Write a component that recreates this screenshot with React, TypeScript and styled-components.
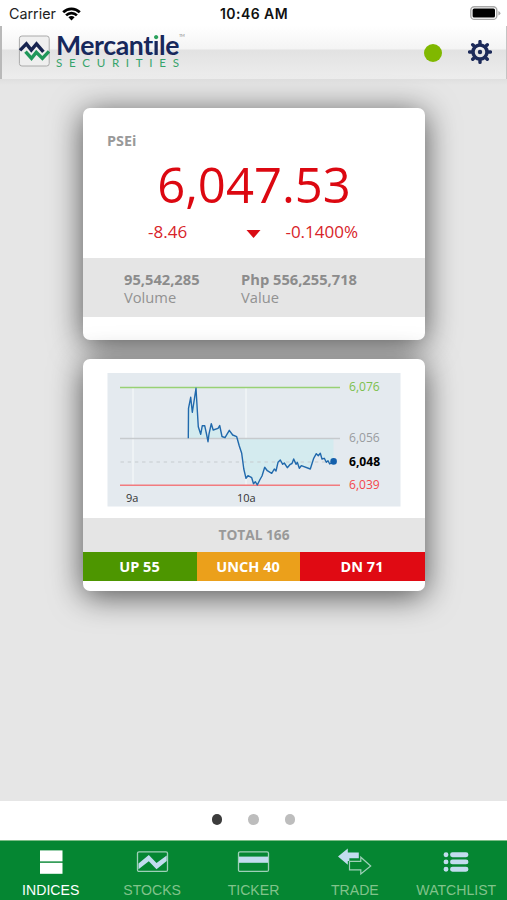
import React from "react";
import styled, { createGlobalStyle } from "styled-components";

const GlobalStyle = createGlobalStyle`
  * { box-sizing: border-box; }
  body { margin: 0; background: #fff; }
`;

const Screen = styled.div`
  width: 507px;
  height: 900px;
  display: flex;
  flex-direction: column;
  overflow: hidden;
  background: #fff;
  font-family: "Open Sans", "Noto Sans", sans-serif;
`;

const StatusBar = styled.div`
  height: 26px;
  flex: none;
  display: grid;
  grid-template-columns: 1fr auto 1fr;
  align-items: center;
  padding: 1px 6px 0 9px;
  font: 400 14.3px/20px Inter, sans-serif;
  color: #222;
`;

const Carrier = styled.div`
  display: flex;
  align-items: center;
  gap: 6px;
`;

const Clock = styled.div`
  font-weight: 600;
  font-size: 14px;
  letter-spacing: 0.45px;
  margin-right: 2px;
  color: #111;
`;

const Battery = styled.svg`
  justify-self: end;
`;

const Header = styled.header`
  height: 53px;
  flex: none;
  display: flex;
  align-items: center;
  padding: 0 14px 0 16px;
  border-left: 2px solid #b9b9b9;
  border-right: 1px solid #c4c4c4;
  background: linear-gradient(#fff 0, #f4f4f4 23px, #e2e2e2 24px, #ededed 53px);
`;

const Brand = styled.div`
  display: flex;
  align-items: flex-start;
  flex: 1;
`;

const BrandWords = styled.div`
  margin-left: 6px;
  height: 40px;
  color: #17285c;
  font-family: Lato, sans-serif;
`;

const BrandName = styled.div`
  display: flex;
  font-size: 26.6px;
  line-height: 25px;
  font-weight: 700;
  letter-spacing: -0.4px;
`;

const TradeMark = styled.span`
  font-size: 4px;
  line-height: 6px;
  color: #888;
  font-weight: 400;
`;

const BrandSub = styled.div`
  font-size: 11.6px;
  line-height: 10px;
  letter-spacing: 6.7px;
  color: #36a36b;
`;

const GreenLetter = styled.span`
  background: linear-gradient(#2ba15c 0 11px, #17285c 11px);
  background-clip: text;
  color: transparent;
`;

const Online = styled.span`
  width: 18px;
  height: 18px;
  border-radius: 50%;
  background: #80b800;
  margin: 0 26px 0 0;
`;

const Content = styled.main`
  height: 722px;
  flex: none;
  padding: 29px 82px 0 83px;
  display: flex;
  flex-direction: column;
  gap: 19px;
  background: linear-gradient(#dfdfdf 0, #e6e6e6 6px);
`;

const Card = styled.section`
  height: 232px;
  flex: none;
  border-radius: 7px;
  overflow: hidden;
  background: #fff;
  box-shadow: 0 5px 32px rgba(0, 0, 0, 0.66);
`;

const IndexName = styled.div`
  padding: 23px 0 0 24px;
  font-size: 14.4px;
  line-height: 20px;
  font-weight: 700;
  color: #999;
`;

const Price = styled.div`
  margin-top: 0;
  text-align: center;
  font-size: 49px;
  line-height: 66px;
  color: #dc0811;
`;

const ChangeRow = styled.div`
  display: flex;
  align-items: center;
  height: 28px;
  margin-bottom: 13px;
  padding-left: 65px;
  font-size: 17px;
  color: #d8242a;
`;

const Arrow = styled.svg`
  margin: 5px 24px 0 auto;
`;

const Percent = styled.span`
  margin-right: 67px;
`;

const Stats = styled.div`
  height: 59px;
  display: grid;
  grid-template-columns: 117px 1fr;
  padding: 12px 0 0 41px;
  background: #e5e5e5;
  color: #929292;
  font-size: 14.7px;
  line-height: 18px;
`;

const Strong = styled.div`
  font-weight: 700;
  color: #8c8c8c;
`;

const ChartBox = styled.div`
  padding: 14px 0 0 24px;
  height: 159px;

  svg { display: block; }
`;

const Total = styled.div`
  height: 34px;
  background: #e5e5e5;
  color: #999;
  text-align: center;
  font-size: 13.7px;
  line-height: 34px;
  font-weight: 700;
`;

const Breadth = styled.div`
  display: grid;
  grid-template-columns: 114px 103px 125px;
  height: 29px;
`;

const Segment = styled.div<{ $color: string }>`
  background: ${(p) => p.$color};
  color: #fff;
  text-align: center;
  font-size: 14.5px;
  line-height: 29px;
  padding-right: 1px;
  font-weight: 700;
`;

const Pager = styled.div`
  height: 39px;
  flex: none;
  display: flex;
  justify-content: center;
  align-items: center;
  gap: 26px;
  padding-bottom: 2px;
`;

const Dot = styled.span<{ $active?: boolean }>`
  width: 10.5px;
  height: 10.5px;
  border-radius: 50%;
  background: ${(p) => (p.$active ? "#3c3c3c" : "#bdbdbd")};
`;

const TabBar = styled.nav`
  height: 60px;
  flex: none;
  display: grid;
  grid-template-columns: repeat(5, 1fr);
  background: #058632;
  border-top: 1px solid #7cbd86;
`;

const Tab = styled.div<{ $active?: boolean }>`
  display: flex;
  flex-direction: column;
  align-items: center;
  padding-top: 5px;
  font: 14.1px/18px "Liberation Sans", sans-serif;
  color: ${(p) => (p.$active ? "#fff" : "#81c38b")};

  svg { margin-bottom: 3px; }
`;

const linePoints =
  "188.3,438.3 188.5,408.3 190.7,397.3 192.3,412.3 193.3,406 196,388.3 197.4,412 198.3,426.7 200.7,434.3 202.3,425.7 204.7,425.7 206.7,435 208,441.7 209,434 211.3,423.7 213.2,430 218,428.3 219.7,425.5 222,436.5 225,437.7 229.3,430.3 232.7,435 236.7,436.7 239.3,446 241.7,453.3 243.8,469 246,478.3 248,475.7 251.7,477.7 253.5,483.7 255.3,481.7 257.3,485 260,479.5 262,476 264.7,467.3 267.3,470.7 271.7,473.3 274.3,469 276,471 278,462.3 280.3,460 282.7,464.3 284.3,463 287.3,467.7 290.3,464.3 292,463.5 293.7,459 296,464.3 297.3,462.3 299.3,468.3 301.3,465.7 310.3,469 313.7,458.3 316.3,453.7 318.3,455.7 320.3,453.3 322,459 324.3,458.3 326.3,462.3 328,460.7 329.7,464 333.5,461.5";

const Chart = () => (
  <svg width="294" height="134" viewBox="107 373 294 134" fontFamily="Open Sans, sans-serif">
    <rect x="107.5" y="373" width="293" height="133.5" fill="#e4eaef" />
    <path d="M133 388v97M246 388v97" stroke="#f3f6f8" strokeWidth="1.4" />
    <polygon points={`${linePoints} 333.5,438.3`} fill="#d4ebef" />
    <path d="M120 438.5H340" stroke="#c6cacd" strokeWidth="1.6" />
    <path d="M120.5 462H333" stroke="#c5cbcf" strokeWidth="1.2" strokeDasharray="3.4 3.8" />
    <path d="M120 387.5H340" stroke="#98d174" strokeWidth="1.4" />
    <path d="M120 485.3H340" stroke="#f27b7f" strokeWidth="1.4" />
    <polyline points={linePoints} fill="none" stroke="#2169ac" strokeWidth="1.4" strokeLinejoin="round" />
    <circle cx="333.6" cy="461.4" r="3.3" fill="#1460ac" />
    <g fontSize="12.1">
      <text x="349" y="391" fill="#7cc04c">6,076</text>
      <text x="349" y="442" fill="#999c9f">6,056</text>
      <text x="349" y="465.6" fill="#000" fontWeight="700">6,048</text>
      <text x="349" y="488.5" fill="#f4474b">6,039</text>
    </g>
    <g fontSize="11" fill="#333">
      <text x="126" y="502">9a</text>
      <text x="237" y="502">10a</text>
    </g>
  </svg>
);

const Wifi = () => (
  <svg width="19" height="14" viewBox="0 0 19 14" fill="none" stroke="#000" strokeWidth="2.7">
    <path d="M1.2 5.2a11.8 11.8 0 0 1 16.6 0M4.1 8.4a7.7 7.7 0 0 1 10.8 0" />
    <path d="M6.4 10.3a4.4 4.4 0 0 1 6.2 0L9.5 13.5z" fill="#000" stroke="none" />
  </svg>
);

const Logo = () => (
  <svg width="32" height="40" viewBox="0 0 32 40">
    <rect x="1.4" y="3" width="29.8" height="30" rx="2.5" fill="#efefef" stroke="#aaa" />
    <path d="M2 17.4L8.4 10.9L13.3 17L18.5 10.9L25.4 18.8" fill="none" stroke="#17244f" strokeWidth="3.4" />
    <path d="M7.5 18.6L13.5 25.4L18.3 19.4L24.4 25.4L31 18.4" fill="none" stroke="#20975a" strokeWidth="3.4" />
  </svg>
);

const Gear = () => (
  <svg width="24" height="25" viewBox="-12 -12 24 25">
    <g fill="none" stroke="#1c2a59" strokeLinecap="round">
      <circle r="7" strokeWidth="3.5" />
      <path
        d="M0-8V-10.4M0 8V10.4M-8 0H-10.4M8 0H10.4M5.7-5.7L7.3-7.3M-5.7 5.7L-7.3 7.3M5.7 5.7L7.3 7.3M-5.7-5.7L-7.3-7.3"
        strokeWidth="3.4"
      />
    </g>
    <circle r="2.2" fill="#1c2a59" />
  </svg>
);

const pale = "#c2dcef";
const outline = "#9ed0b8";

const IndicesIcon = () => (
  <svg width="34" height="32" viewBox="0 0 34 32" fill="#fff">
    <rect x="6" y="4.4" width="22.5" height="11" />
    <rect x="6" y="16.8" width="22.5" height="11" />
  </svg>
);

const StocksIcon = () => (
  <svg width="34" height="32" viewBox="0 0 34 32">
    <rect x="2.5" y="5.8" width="30" height="19.6" rx="1.5" fill="none" stroke={outline} strokeWidth="1.3" />
    <path d="M3.5 17.5L13.8 9L21.5 17L31.7 9.5V15L21.5 23.2L13.8 15.3L3.5 23.2z" fill={pale} />
  </svg>
);

const TickerIcon = () => (
  <svg width="34" height="32" viewBox="0 0 34 32">
    <rect x="2.5" y="5.8" width="30" height="19.6" rx="1.5" fill="none" stroke={outline} strokeWidth="1.3" />
    <path d="M3 10.6h29v6.2h-29z" fill={pale} />
  </svg>
);

const TradeIcon = () => (
  <svg width="34" height="32" viewBox="0 0 34 32">
    <path d="M0 10.5L9.8 2.4V6.4H20.8V12.2H11.4V15H9.8V18.8z" fill={pale} />
    <path d="M11.5 15.3H22.8V11.2L32.7 20L22.8 28V23.8H11.5z" fill="none" stroke={outline} strokeWidth="1.2" />
  </svg>
);

const WatchlistIcon = () => (
  <svg width="34" height="32" viewBox="0 0 34 32" stroke={pale} strokeWidth="4.9" strokeLinecap="round">
    <path d="M7 8.7h.01M13.5 8.7H27M7 15.9h.01M13.5 15.9H27M7 23.3h.01M13.5 23.3H27" />
  </svg>
);

const tabs = [
  { label: "INDICES", Icon: IndicesIcon },
  { label: "STOCKS", Icon: StocksIcon },
  { label: "TICKER", Icon: TickerIcon },
  { label: "TRADE", Icon: TradeIcon },
  { label: "WATCHLIST", Icon: WatchlistIcon },
];

export default function App() {
  return (
    <Screen>
      <GlobalStyle />
      <StatusBar>
        <Carrier>
          Carrier
          <Wifi />
        </Carrier>
        <Clock>10:46 AM</Clock>
        <Battery width="31" height="15" viewBox="0 0 31 15">
          <rect x="0.8" y="0.8" width="26" height="12.6" rx="3.5" fill="#fff" stroke="#a8a8a8" strokeWidth="1.4" />
          <rect x="2.6" y="2.6" width="22.4" height="9" rx="1.5" fill="#000" />
          <path d="M28.4 5v4.6q2-.9 2-2.3T28.4 5z" fill="#aaa" />
        </Battery>
      </StatusBar>
      <Header>
        <Brand>
          <Logo />
          <BrandWords>
            <BrandName>
              <span>
                Mercant<GreenLetter>i</GreenLetter>le
              </span>
              <TradeMark>TM</TradeMark>
            </BrandName>
            <BrandSub>SECURITIES</BrandSub>
          </BrandWords>
        </Brand>
        <Online />
        <Gear />
      </Header>
      <Content>
        <Card>
          <IndexName>PSEi</IndexName>
          <Price>6,047.53</Price>
          <ChangeRow>
            <span>-8.46</span>
            <Arrow width="15" height="8" viewBox="0 0 15 8">
              <path d="M0.5 0h14L7.5 8z" fill="#d90c14" />
            </Arrow>
            <Percent>-0.1400%</Percent>
          </ChangeRow>
          <Stats>
            <div>
              <Strong>95,542,285</Strong>
              Volume
            </div>
            <div>
              <Strong>Php 556,255,718</Strong>
              Value
            </div>
          </Stats>
        </Card>
        <Card>
          <ChartBox>
            <Chart />
          </ChartBox>
          <Total>TOTAL 166</Total>
          <Breadth>
            <Segment $color="#4d9600">UP 55</Segment>
            <Segment $color="#eba01b">UNCH 40</Segment>
            <Segment $color="#e00a13">DN 71</Segment>
          </Breadth>
        </Card>
      </Content>
      <Pager>
        <Dot $active />
        <Dot />
        <Dot />
      </Pager>
      <TabBar>
        {tabs.map(({ label, Icon }, i) => (
          <Tab key={label} $active={i === 0}>
            <Icon />
            {label}
          </Tab>
        ))}
      </TabBar>
    </Screen>
  );
}
